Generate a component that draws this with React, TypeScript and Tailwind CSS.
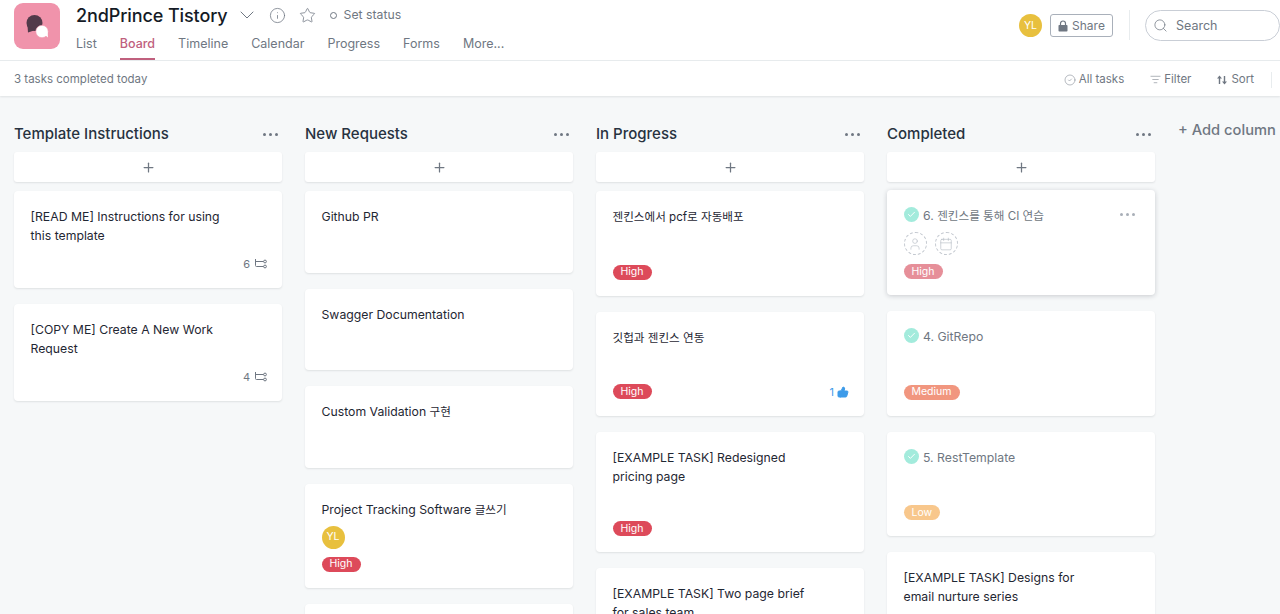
import React from "react";
import { Calendar, Check, ChevronDown, CircleCheck, Info, ListFilter, Plus, Search, Star, ThumbsUp, User } from "lucide-react";

type Card = {
  title: React.ReactNode;
  h: string;
  tag?: "High" | "Medium" | "Low";
  done?: boolean;
  faded?: boolean;
  sub?: number;
  likes?: number;
  avatar?: boolean;
  hover?: boolean;
};

const font = { fontFamily: 'Inter, "Noto Sans CJK KR", sans-serif' };

// 한글은 라틴 글자보다 살짝 작게
const Kr = ({ children }: { children: React.ReactNode }) => <span className="text-[11.6px]">{children}</span>;

const columns: { name: string; cards: Card[] }[] = [
  {
    name: "Template Instructions",
    cards: [
      { title: "[READ ME] Instructions for using this template", h: "h-[97px]", sub: 6 },
      { title: "[COPY ME] Create A New Work Request", h: "h-[97px]", sub: 4 },
    ],
  },
  {
    name: "New Requests",
    cards: [
      { title: "Github PR", h: "h-[81.5px]" },
      { title: "Swagger Documentation", h: "h-[81.5px]" },
      { title: <>Custom Validation <Kr>구현</Kr></>, h: "h-[81.5px]" },
      { title: <>Project Tracking Software <Kr>글쓰기</Kr></>, h: "h-[104px]", avatar: true, tag: "High" },
      { title: "", h: "h-[80px]" },
    ],
  },
  {
    name: "In Progress",
    cards: [
      { title: <Kr>젠킨스에서 pcf로 자동배포</Kr>, h: "h-[104.5px]", tag: "High" },
      { title: <Kr>깃헙과 젠킨스 연동</Kr>, h: "h-[104.5px]", tag: "High", likes: 1 },
      { title: "[EXAMPLE TASK] Redesigned pricing page", h: "h-[120px]", tag: "High" },
      { title: "[EXAMPLE TASK] Two page brief for sales team", h: "h-[120px]" },
    ],
  },
  {
    name: "Completed",
    cards: [
      { title: <>6. <Kr>젠킨스를 통해 CI 연습</Kr></>, h: "h-[105px]", tag: "High", done: true, faded: true, hover: true },
      { title: "4. GitRepo", h: "h-[104.5px]", tag: "Medium", done: true },
      { title: "5. RestTemplate", h: "h-[104.5px]", tag: "Low", done: true },
      { title: "[EXAMPLE TASK] Designs for email nurture series", h: "h-[120px]" },
    ],
  },
];

const SubtaskIcon = () => (
  <svg width="13" height="12" viewBox="0 0 13 12" fill="none" stroke="#6f7782" strokeWidth="1">
    <path d="M1.5 1v6.5a1 1 0 0 0 1 1h7" />
    <path d="M1.5 3.5h8" />
    <circle cx="11" cy="3.5" r="1.4" />
    <circle cx="11" cy="8.5" r="1.4" />
  </svg>
);

const ChatLogo = () => (
  <svg width="46" height="46" viewBox="0 0 46 46">
    <circle cx="20.5" cy="20" r="8" fill="#523a4a" />
    <path d="M13.5 22l.5 7.5 6-2z" fill="#523a4a" />
    <circle cx="28" cy="28.5" r="6.2" fill="#fff" stroke="#f093ab" strokeWidth="0.6" />
    <path d="M31 32l3 2.5-.5-6z" fill="#fff" />
  </svg>
);

const LockIcon = () => (
  <svg width="10" height="12" viewBox="0 0 10 12">
    <path d="M2.5 5.5V3.5a2.5 2.5 0 0 1 5 0v2" fill="none" stroke="#6f7782" strokeWidth="1.2" />
    <rect x="0.5" y="5" width="9" height="6.5" rx="0.8" fill="#6f7782" />
  </svg>
);

const SortIcon = () => (
  <svg width="10" height="10" viewBox="0 0 10 10" fill="#6f7782">
    <path d="M2.5 0.5L5 3.5H3.2V9H1.8V3.5H0z" />
    <path d="M7.5 9.5L5 6.5h1.8V1h1.4v5.5H10z" />
  </svg>
);

const Avatar = () => (
  <div className="w-[23px] h-[23px] rounded-full bg-[#e8c03e] text-white text-[10.5px] flex items-center justify-center">YL</div>
);

const tagClass = {
  High: "bg-[#dd4a5a]",
  Medium: "bg-[#f1967f]",
  Low: "bg-[#f8c78c]",
};

const Tag = ({ name, faded }: { name: "High" | "Medium" | "Low"; faded?: boolean }) => (
  <span className={`inline-flex items-center h-[15px] px-[8px] rounded-full text-white text-[10.5px] ${faded ? "bg-[#e68f99]" : tagClass[name]}`}>
    {name}
  </span>
);

const TaskCard = ({ card }: { card: Card }) => (
  <div className={`${card.h} shrink-0 bg-white rounded relative flex flex-col pl-[16.5px] pr-[15px] pt-4 pb-4 ${card.hover ? "-mt-px shadow-[0_1px_5px_rgba(21,27,38,0.2)]" : "shadow-[0_1px_2px_rgba(21,27,38,0.1)]"}`}>
    <div className="flex items-start">
      {card.done && (
        <span className="w-[15px] h-[15px] mt-[1px] mr-[4.5px] rounded-full bg-[#a3ebdc] flex items-center justify-center shrink-0">
          <Check size={9} strokeWidth={2.5} color="#fff" />
        </span>
      )}
      <p className={`text-[12.25px] leading-[19px] pr-[40px] ${card.done ? "text-[#6f7782]" : "text-[#1f2733]"}`}>{card.title}</p>
    </div>
    {card.hover && (
      <div className="absolute right-[20px] top-[23px] flex gap-[3px]">
        <span className="w-[3px] h-[3px] rounded-full bg-[#a9afb8]" />
        <span className="w-[3px] h-[3px] rounded-full bg-[#a9afb8]" />
        <span className="w-[3px] h-[3px] rounded-full bg-[#a9afb8]" />
      </div>
    )}
    {card.hover && (
      <div className="flex gap-2 mt-[6px]">
        <span className="w-[23px] h-[23px] rounded-full border border-dashed border-[#c4c9d0] flex items-center justify-center">
          <User size={14} strokeWidth={1} color="#b0b6bf" />
        </span>
        <span className="w-[23px] h-[23px] rounded-full border border-dashed border-[#c4c9d0] flex items-center justify-center">
          <Calendar size={14} strokeWidth={1} color="#b0b6bf" />
        </span>
      </div>
    )}
    {card.avatar && (
      <div className="mt-[6px]">
        <Avatar />
      </div>
    )}
    <div className="mt-auto flex items-center justify-between">
      <div className="flex">{card.tag && <Tag name={card.tag} faded={card.faded} />}</div>
      {card.sub !== undefined && (
        <div className="flex items-center gap-[4px] text-[11px] text-[#6f7782]">
          {card.sub}
          <SubtaskIcon />
        </div>
      )}
      {card.likes !== undefined && (
        <div className="flex items-center gap-[3px] text-[11px] text-[#3d9be9]">
          {card.likes}
          <ThumbsUp size={12} fill="#3d9be9" color="#3d9be9" />
        </div>
      )}
    </div>
  </div>
);

const Dots = () => (
  <div className="flex gap-[3px] mr-[4px]">
    <span className="w-[3px] h-[3px] rounded-full bg-[#6f7782]" />
    <span className="w-[3px] h-[3px] rounded-full bg-[#6f7782]" />
    <span className="w-[3px] h-[3px] rounded-full bg-[#6f7782]" />
  </div>
);

export default function App() {
  return (
    <div className="w-[1280px] h-[614px] overflow-hidden bg-[#f6f8f9] flex flex-col" style={font}>
      {/* header */}
      <header className="h-[61px] shrink-0 bg-white border-b border-[#e8ecee] flex pl-[14px]">
        <div className="w-[46px] h-[46px] mt-[3px] rounded-[9px] bg-[#f093ab] shrink-0">
          <ChatLogo />
        </div>
        <div className="ml-4 flex flex-col">
          <div className="flex items-center h-[30px]">
            <span className="text-[18px] font-medium text-[#151b26] tracking-[-0.1px]">2ndPrince Tistory</span>
            <ChevronDown size={24} strokeWidth={1} color="#6f7782" className="ml-[7px]" />
            <Info size={17} strokeWidth={1.1} color="#6f7782" className="ml-[10px]" />
            <Star size={17} strokeWidth={1.1} color="#6f7782" className="ml-[13px]" />
            <span className="ml-[14px] w-[7px] h-[7px] rounded-full border border-[#6f7782]" />
            <span className="ml-[7px] text-[12.25px] text-[#6f7782]">Set status</span>
          </div>
          <nav className="flex gap-[23px] text-[12.5px] text-[#6f7782]">
            <span className="h-[30px] pt-[5px]">List</span>
            <span className="h-[30px] pt-[5px] text-[#c0607e] font-medium border-b-2 border-[#c0607e]">Board</span>
            <span className="h-[30px] pt-[5px]">Timeline</span>
            <span className="h-[30px] pt-[5px]">Calendar</span>
            <span className="h-[30px] pt-[5px]">Progress</span>
            <span className="h-[30px] pt-[5px]">Forms</span>
            <span className="h-[30px] pt-[5px]">More...</span>
          </nav>
        </div>
        <div className="ml-auto flex items-start pt-[10px]">
          <div className="mt-[4px]">
            <Avatar />
          </div>
          <button className="ml-2 mt-[4px] w-[63px] h-[23px] rounded-[3px] border border-[#a9b0ba] flex items-center justify-center gap-[4px] text-[12px] text-[#6f7782]">
            <LockIcon />
            Share
          </button>
          <div className="ml-4 w-px h-[30px] bg-[#e8ecee]" />
          <div className="ml-[15px] w-[135px] h-[31px] rounded-full border border-[#c9ced6] flex items-center pl-[7px] text-[12.5px] text-[#6f7782]">
            <Search size={15} strokeWidth={1.2} color="#6f7782" />
            <span className="ml-[8px] mt-px">Search</span>
          </div>
        </div>
      </header>

      {/* toolbar */}
      <div className="h-[35px] shrink-0 bg-white shadow-[0_1px_2px_rgba(21,27,38,0.1)] flex items-center pt-[2px] pl-[14px] text-[11.5px] text-[#6f7782] relative">
        <span>3 tasks completed today</span>
        <div className="ml-auto flex items-center">
          <span className="flex items-center gap-[3px]">
            <CircleCheck size={12} strokeWidth={1} />
            All tasks
          </span>
          <span className="flex items-center gap-[3px] ml-[26px]">
            <ListFilter size={11} strokeWidth={1.2} />
            Filter
          </span>
          <span className="flex items-center gap-[4px] ml-[26px]">
            <SortIcon />
            Sort
          </span>
          <span className="ml-[17px] mr-[8px] w-px h-[16px] bg-[#e8ecee]" />
        </div>
      </div>

      {/* board */}
      <main className="flex gap-[23px] pl-[14px] pt-[27px] flex-1 min-h-0">
        {columns.map((col) => (
          <section key={col.name} className="w-[268px] shrink-0 flex flex-col">
            <div className="flex items-center justify-between h-[20px] pt-[2px]">
              <h2 className="text-[15px] font-medium text-[#273240]">{col.name}</h2>
              <Dots />
            </div>
            <button className="mt-[9px] h-[30px] shrink-0 bg-white rounded-[3px] shadow-[0_1px_2px_rgba(21,27,38,0.1)] flex items-center justify-center">
              <Plus size={15} color="#6f7782" strokeWidth={2} />
            </button>
            <div className="mt-[9px] flex flex-col gap-4">
              {col.cards.map((card, i) => (
                <TaskCard key={i} card={card} />
              ))}
            </div>
          </section>
        ))}
        <div className="text-[14.7px] font-medium text-[#6f7782] whitespace-nowrap -mt-1">+ Add column</div>
      </main>
    </div>
  );
}
